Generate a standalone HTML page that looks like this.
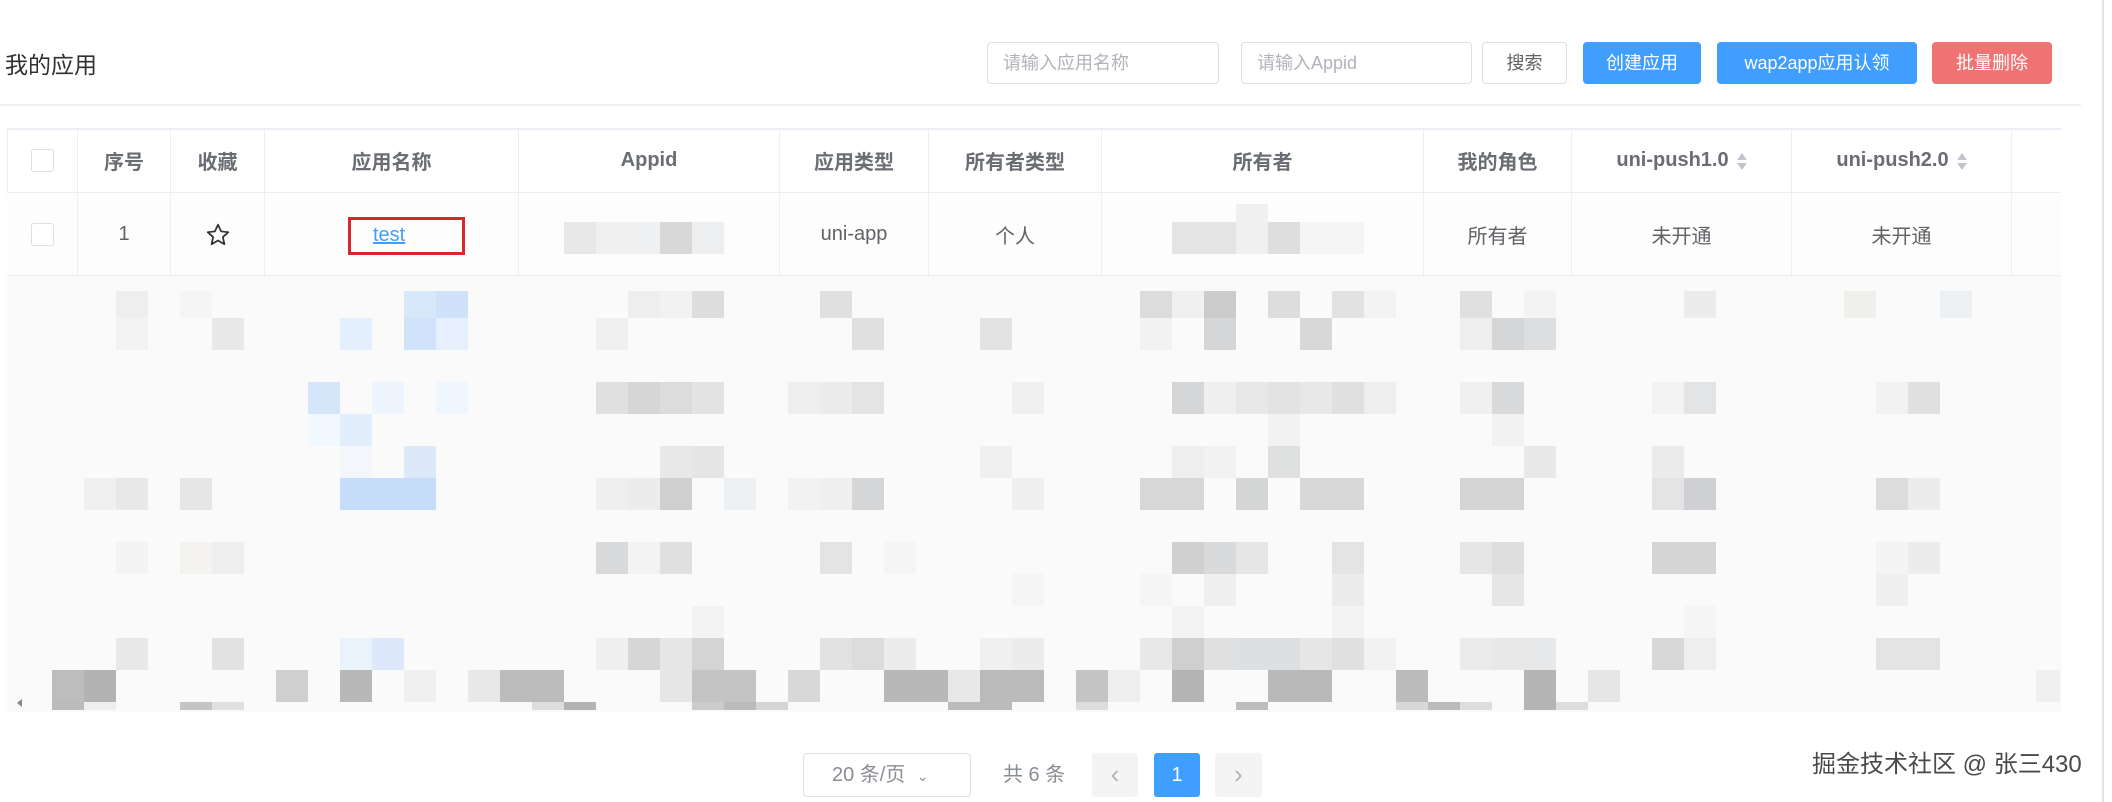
<!DOCTYPE html>
<html><head><meta charset="utf-8"><style>
*{margin:0;padding:0;box-sizing:border-box}
body{width:2112px;height:802px;background:#fff;position:relative;overflow:hidden;font-family:"Liberation Sans","Noto Sans CJK SC",sans-serif;color:#606266}
.a{position:absolute}
.inp{position:absolute;top:42px;height:42px;border:1px solid #dcdfe6;border-radius:4px;font-size:18px;color:#b0b3b8;padding-left:15px;line-height:40px}
.btn{position:absolute;top:42px;height:42px;border-radius:4px;font-size:18px;color:#fff;text-align:center;line-height:42px}
.th,.td{position:absolute;display:flex;align-items:center;justify-content:center;border-right:1px solid #ebeef5}
.th{top:128px;height:65px;font-size:20px;font-weight:bold;color:#6a6d73}
.td{top:193px;height:83px;font-size:20px;color:#606266}
.cb{width:23px;height:23px;border:1px solid #dcdfe6;border-radius:3px;background:#fff}
.car{display:inline-block;margin-left:8px;width:10px;height:20px;position:relative}
.car:before{content:"";position:absolute;left:0;top:2px;border:5px solid transparent;border-bottom:7px solid #c0c4cc;border-top:0}
.car:after{content:"";position:absolute;left:0;top:12px;border:5px solid transparent;border-top:7px solid #c0c4cc;border-bottom:0}
</style></head><body>
<div class="a" style="left:5px;top:50px;font-size:23px;color:#303133;line-height:30px">我的应用</div>
<div class="inp" style="left:987px;width:232px">请输入应用名称</div>
<div class="inp" style="left:1241px;width:231px">请输入Appid</div>
<div class="btn" style="left:1482px;width:85px;border:1px solid #dcdfe6;color:#606266;line-height:40px">搜索</div>
<div class="btn" style="left:1583px;width:118px;background:#409eff">创建应用</div>
<div class="btn" style="left:1717px;width:200px;background:#409eff">wap2app应用认领</div>
<div class="btn" style="left:1932px;width:120px;background:#f07272">批量删除</div>
<div class="a" style="left:0;top:104px;width:2081px;height:2px;background:#eef0f3"></div>
<div class="a" style="left:2102px;top:0;width:2px;height:802px;background:#e4e4e4"></div>

<!-- table frame -->
<div class="a" style="left:7px;top:128px;width:2054px;height:584px;border-left:1px solid #ebeef5;border-top:2px solid #ebeef5"></div>
<div class="a" style="left:7px;top:192px;width:2054px;height:1px;background:#ebeef5"></div>
<div class="a" style="left:7px;top:193px;width:2054px;height:83px;background:#fdfdfd"></div>
<div class="a" style="left:7px;top:275px;width:2054px;height:1px;background:#ebeef5"></div>
<div class="a" style="left:7px;top:276px;width:2054px;height:436px;background:#fafafa"></div>

<div class="th" style="left:7px;width:71px"><div class="cb"></div></div>
<div class="th" style="left:78px;width:93px">序号</div>
<div class="th" style="left:171px;width:94px">收藏</div>
<div class="th" style="left:265px;width:254px">应用名称</div>
<div class="th" style="left:519px;width:261px">Appid</div>
<div class="th" style="left:780px;width:149px">应用类型</div>
<div class="th" style="left:929px;width:173px">所有者类型</div>
<div class="th" style="left:1102px;width:322px">所有者</div>
<div class="th" style="left:1424px;width:148px">我的角色</div>
<div class="th" style="left:1572px;width:220px">uni-push1.0<span class="car"></span></div>
<div class="th" style="left:1792px;width:220px">uni-push2.0<span class="car"></span></div>

<div class="td" style="left:7px;width:71px"><div class="cb"></div></div>
<div class="td" style="left:78px;width:93px">1</div>
<div class="td" style="left:171px;width:94px"><svg width="26" height="26" viewBox="0 0 24 24"><path d="M12 2.5l2.9 6.2 6.6.7-5 4.5 1.4 6.6L12 17.1l-5.9 3.4 1.4-6.6-5-4.5 6.6-.7z" fill="none" stroke="#303133" stroke-width="1.6" stroke-linejoin="round"/></svg></div>
<div class="td" style="left:265px;width:254px"></div>
<div class="a" style="left:348px;top:217px;width:117px;height:38px;border:3px solid #d9272e"></div>
<div class="a" style="left:373px;top:221px;font-size:20px;color:#409eff;text-decoration:underline;line-height:28px">test</div>
<div class="td" style="left:519px;width:261px"></div>
<div class="td" style="left:780px;width:149px">uni-app</div>
<div class="td" style="left:929px;width:173px">个人</div>
<div class="td" style="left:1102px;width:322px"></div>
<div class="td" style="left:1424px;width:148px">所有者</div>
<div class="td" style="left:1572px;width:220px">未开通</div>
<div class="td" style="left:1792px;width:220px">未开通</div>

<svg class="a" style="left:0;top:0" width="2112" height="802">
<g>
<rect x="564" y="222" width="32" height="32" fill="#e8e8e8"/><rect x="596" y="222" width="32" height="32" fill="#f0f0f0"/><rect x="628" y="222" width="32" height="32" fill="#eef0f2"/><rect x="660" y="222" width="32" height="32" fill="#d8d8d8"/><rect x="692" y="222" width="32" height="32" fill="#eceef0"/>
<rect x="1172" y="222" width="64" height="32" fill="#e4e4e4"/><rect x="1236" y="204" width="32" height="50" fill="#f0f0f0"/><rect x="1268" y="222" width="32" height="32" fill="#dedede"/><rect x="1300" y="222" width="64" height="32" fill="#f5f5f5"/>
</g>
<g id="m">
<!-- r0 y291 -->
<rect x="116" y="291" width="32" height="27" fill="#eee"/><rect x="180" y="291" width="32" height="27" fill="#f5f5f5"/><rect x="404" y="291" width="32" height="27" fill="#d8e8fb"/><rect x="436" y="291" width="32" height="27" fill="#cfe2f9"/><rect x="628" y="291" width="32" height="27" fill="#eee"/><rect x="660" y="291" width="32" height="27" fill="#f2f2f2"/><rect x="692" y="291" width="32" height="27" fill="#ddd"/><rect x="820" y="291" width="32" height="27" fill="#e0e0e0"/>
<rect x="1140" y="291" width="32" height="27" fill="#dcdcdc"/><rect x="1172" y="291" width="32" height="27" fill="#f0f0f0"/><rect x="1204" y="291" width="32" height="27" fill="#ccc"/><rect x="1268" y="291" width="32" height="27" fill="#ddd"/><rect x="1332" y="291" width="32" height="27" fill="#e2e2e2"/><rect x="1364" y="291" width="32" height="27" fill="#f3f3f3"/><rect x="1460" y="291" width="32" height="27" fill="#e0e0e0"/><rect x="1524" y="291" width="32" height="27" fill="#f3f3f3"/><rect x="1684" y="291" width="32" height="27" fill="#ececec"/><rect x="1844" y="291" width="32" height="27" fill="#efefec"/><rect x="1940" y="291" width="32" height="27" fill="#eef1f3"/>
<!-- r1 y318 -->
<rect x="116" y="318" width="32" height="32" fill="#f3f3f3"/><rect x="212" y="318" width="32" height="32" fill="#e8e8e8"/><rect x="340" y="318" width="32" height="32" fill="#e3effc"/><rect x="404" y="318" width="32" height="32" fill="#d0e3fa"/><rect x="436" y="318" width="32" height="32" fill="#e6f0fc"/><rect x="596" y="318" width="32" height="32" fill="#f0f0f0"/><rect x="852" y="318" width="32" height="32" fill="#e0e0e0"/><rect x="980" y="318" width="32" height="32" fill="#e3e3e3"/>
<rect x="1140" y="318" width="32" height="32" fill="#f2f2f2"/><rect x="1204" y="318" width="32" height="32" fill="#d4d6d8"/><rect x="1300" y="318" width="32" height="32" fill="#d8d8d8"/><rect x="1460" y="318" width="32" height="32" fill="#eee"/><rect x="1492" y="318" width="32" height="32" fill="#d4d6d8"/><rect x="1524" y="318" width="32" height="32" fill="#dcdee0"/>
<!-- r3 y382 -->
<rect x="308" y="382" width="32" height="32" fill="#d5e6fb"/><rect x="372" y="382" width="32" height="32" fill="#eef5fe"/><rect x="436" y="382" width="32" height="32" fill="#f0f6fe"/><rect x="596" y="382" width="32" height="32" fill="#e0e0e0"/><rect x="628" y="382" width="32" height="32" fill="#d6d6d6"/><rect x="660" y="382" width="32" height="32" fill="#dcdcdc"/><rect x="692" y="382" width="32" height="32" fill="#e3e3e3"/><rect x="788" y="382" width="32" height="32" fill="#eee"/><rect x="820" y="382" width="32" height="32" fill="#ebebeb"/><rect x="852" y="382" width="32" height="32" fill="#e4e4e4"/><rect x="1012" y="382" width="32" height="32" fill="#f0f0f0"/>
<rect x="1172" y="382" width="32" height="32" fill="#d4d6d8"/><rect x="1204" y="382" width="32" height="32" fill="#efefef"/><rect x="1236" y="382" width="32" height="32" fill="#e8e8e8"/><rect x="1268" y="382" width="32" height="32" fill="#e3e3e3"/><rect x="1300" y="382" width="32" height="32" fill="#e8e8e8"/><rect x="1332" y="382" width="32" height="32" fill="#e0e0e0"/><rect x="1364" y="382" width="32" height="32" fill="#eee"/><rect x="1460" y="382" width="32" height="32" fill="#f0f0f0"/><rect x="1492" y="382" width="32" height="32" fill="#d8d9db"/><rect x="1652" y="382" width="32" height="32" fill="#f3f3f3"/><rect x="1684" y="382" width="32" height="32" fill="#e2e4e6"/><rect x="1876" y="382" width="32" height="32" fill="#f2f2f2"/><rect x="1908" y="382" width="32" height="32" fill="#e0e0e0"/>
<!-- r4 y414 -->
<rect x="308" y="414" width="32" height="32" fill="#f2f8ff"/><rect x="340" y="414" width="32" height="32" fill="#e2eefc"/><rect x="1268" y="414" width="32" height="32" fill="#f2f2f2"/><rect x="1492" y="414" width="32" height="32" fill="#f2f2f2"/>
<!-- r5 y446 -->
<rect x="340" y="446" width="32" height="32" fill="#f3f7fc"/><rect x="404" y="446" width="32" height="32" fill="#dde9f9"/><rect x="660" y="446" width="32" height="32" fill="#e8e8e8"/><rect x="692" y="446" width="32" height="32" fill="#e5e5e5"/><rect x="980" y="446" width="32" height="32" fill="#f0f0f0"/>
<rect x="1172" y="446" width="32" height="32" fill="#eee"/><rect x="1204" y="446" width="32" height="32" fill="#f2f2f2"/><rect x="1268" y="446" width="32" height="32" fill="#dfe0e0"/><rect x="1524" y="446" width="32" height="32" fill="#e8e8e8"/><rect x="1652" y="446" width="32" height="32" fill="#ebebeb"/>
<!-- r6 y478 -->
<rect x="84" y="478" width="32" height="32" fill="#f0f0f0"/><rect x="116" y="478" width="32" height="32" fill="#e8e8e8"/><rect x="180" y="478" width="32" height="32" fill="#e6e6e6"/><rect x="340" y="478" width="96" height="32" fill="#c5ddf8"/><rect x="596" y="478" width="32" height="32" fill="#efefef"/><rect x="628" y="478" width="32" height="32" fill="#ececec"/><rect x="660" y="478" width="32" height="32" fill="#cfcfcf"/><rect x="724" y="478" width="32" height="32" fill="#eef1f3"/><rect x="788" y="478" width="32" height="32" fill="#f2f2f2"/><rect x="820" y="478" width="32" height="32" fill="#efefef"/><rect x="852" y="478" width="32" height="32" fill="#d4d6d8"/><rect x="1012" y="478" width="32" height="32" fill="#efefef"/>
<rect x="1140" y="478" width="64" height="32" fill="#d7d7d7"/><rect x="1236" y="478" width="32" height="32" fill="#d4d6d6"/><rect x="1300" y="478" width="64" height="32" fill="#d8d8d8"/><rect x="1460" y="478" width="64" height="32" fill="#d4d4d4"/><rect x="1652" y="478" width="32" height="32" fill="#e4e4e4"/><rect x="1684" y="478" width="32" height="32" fill="#cfd0d4"/><rect x="1876" y="478" width="32" height="32" fill="#dcdcdc"/><rect x="1908" y="478" width="32" height="32" fill="#ececec"/>
<!-- r8 y542 -->
<rect x="116" y="542" width="32" height="32" fill="#f4f4f4"/><rect x="180" y="542" width="32" height="32" fill="#f5f3f0"/><rect x="212" y="542" width="32" height="32" fill="#eee"/><rect x="596" y="542" width="32" height="32" fill="#d8d9db"/><rect x="628" y="542" width="32" height="32" fill="#f3f3f3"/><rect x="660" y="542" width="32" height="32" fill="#e0e0e0"/><rect x="820" y="542" width="32" height="32" fill="#e4e4e4"/><rect x="884" y="542" width="32" height="32" fill="#f5f5f5"/>
<rect x="1172" y="542" width="32" height="32" fill="#d0d0d0"/><rect x="1204" y="542" width="32" height="32" fill="#d8dadc"/><rect x="1236" y="542" width="32" height="32" fill="#e6e6e6"/><rect x="1332" y="542" width="32" height="32" fill="#e4e4e4"/><rect x="1460" y="542" width="32" height="32" fill="#e6e6e6"/><rect x="1492" y="542" width="32" height="32" fill="#dedede"/><rect x="1652" y="542" width="64" height="32" fill="#d5d5d5"/><rect x="1876" y="542" width="32" height="32" fill="#f4f4f4"/><rect x="1908" y="542" width="32" height="32" fill="#ececec"/>
<!-- r9 y574 -->
<rect x="1012" y="574" width="32" height="32" fill="#f5f5f5"/><rect x="1140" y="574" width="32" height="32" fill="#f5f5f5"/><rect x="1204" y="574" width="32" height="32" fill="#efefef"/><rect x="1332" y="574" width="32" height="32" fill="#ececec"/><rect x="1492" y="574" width="32" height="32" fill="#e6e6e6"/><rect x="1876" y="574" width="32" height="32" fill="#efefef"/>
<!-- r10 y606 -->
<rect x="692" y="606" width="32" height="32" fill="#f3f3f3"/><rect x="1172" y="606" width="32" height="32" fill="#f3f3f3"/><rect x="1332" y="606" width="32" height="32" fill="#f3f3f3"/><rect x="1684" y="606" width="32" height="32" fill="#f5f5f5"/>
<!-- r11 y638 -->
<rect x="116" y="638" width="32" height="32" fill="#e8e8e8"/><rect x="212" y="638" width="32" height="32" fill="#e2e2e2"/><rect x="340" y="638" width="32" height="32" fill="#eaf2fc"/><rect x="372" y="638" width="32" height="32" fill="#dde9fa"/><rect x="596" y="638" width="32" height="32" fill="#efefef"/><rect x="628" y="638" width="32" height="32" fill="#d6d6d6"/><rect x="660" y="638" width="32" height="32" fill="#e6e6e6"/><rect x="692" y="638" width="32" height="32" fill="#d4d4d4"/><rect x="820" y="638" width="32" height="32" fill="#e2e2e2"/><rect x="852" y="638" width="32" height="32" fill="#dcdcdc"/><rect x="884" y="638" width="32" height="32" fill="#ececec"/><rect x="980" y="638" width="32" height="32" fill="#f0f0f0"/><rect x="1012" y="638" width="32" height="32" fill="#ececec"/>
<rect x="1140" y="638" width="32" height="32" fill="#e8e8e8"/><rect x="1172" y="638" width="32" height="32" fill="#cfcfcf"/><rect x="1204" y="638" width="32" height="32" fill="#e0e0e0"/><rect x="1236" y="638" width="64" height="32" fill="#dde0e2"/><rect x="1300" y="638" width="32" height="32" fill="#e6e6e6"/><rect x="1332" y="638" width="32" height="32" fill="#e0e0e0"/><rect x="1364" y="638" width="32" height="32" fill="#f2f2f2"/><rect x="1460" y="638" width="32" height="32" fill="#ebebeb"/><rect x="1492" y="638" width="32" height="32" fill="#e8e8e8"/><rect x="1524" y="638" width="32" height="32" fill="#e6e8ea"/><rect x="1652" y="638" width="32" height="32" fill="#d8d8d8"/><rect x="1684" y="638" width="32" height="32" fill="#eee"/><rect x="1876" y="638" width="64" height="32" fill="#e4e4e4"/>
<!-- r12 y670 -->
<rect x="52" y="670" width="32" height="32" fill="#bdbdbd"/><rect x="84" y="670" width="32" height="32" fill="#b3b3b3"/><rect x="276" y="670" width="32" height="32" fill="#cfcfcf"/><rect x="340" y="670" width="32" height="32" fill="#b8b8b8"/><rect x="404" y="670" width="32" height="32" fill="#f0f0f0"/><rect x="468" y="670" width="32" height="32" fill="#e8e8e8"/><rect x="500" y="670" width="64" height="32" fill="#bcbcbc"/><rect x="660" y="670" width="32" height="32" fill="#e6e6e6"/><rect x="692" y="670" width="64" height="32" fill="#c4c4c4"/><rect x="788" y="670" width="32" height="32" fill="#d8d8d8"/><rect x="884" y="670" width="64" height="32" fill="#b8b8b8"/><rect x="948" y="670" width="32" height="32" fill="#e8e8e8"/><rect x="980" y="670" width="64" height="32" fill="#bababa"/>
<rect x="1076" y="670" width="32" height="32" fill="#c4c4c4"/><rect x="1108" y="670" width="32" height="32" fill="#eee"/><rect x="1172" y="670" width="32" height="32" fill="#b4b4b4"/><rect x="1268" y="670" width="64" height="32" fill="#b9b9b9"/><rect x="1396" y="670" width="32" height="32" fill="#bbb"/><rect x="1524" y="670" width="32" height="32" fill="#b4b4b4"/><rect x="1588" y="670" width="32" height="32" fill="#e6e6e6"/><rect x="2036" y="670" width="24" height="32" fill="#f0f0f0"/>
<!-- r13 y702 -->
<rect x="52" y="702" width="32" height="8" fill="#bbb"/><rect x="84" y="702" width="32" height="8" fill="#eee"/><rect x="180" y="702" width="32" height="8" fill="#c4c4c4"/><rect x="212" y="702" width="32" height="8" fill="#e0e0e0"/><rect x="532" y="702" width="32" height="8" fill="#ddd"/><rect x="564" y="702" width="32" height="8" fill="#b3b3b3"/><rect x="692" y="702" width="32" height="8" fill="#ccc"/><rect x="724" y="702" width="32" height="8" fill="#bbb"/><rect x="756" y="702" width="32" height="8" fill="#d4d4d4"/><rect x="948" y="702" width="64" height="8" fill="#bbb"/>
<rect x="1076" y="702" width="32" height="8" fill="#ddd"/><rect x="1236" y="702" width="32" height="8" fill="#bdbdbd"/><rect x="1396" y="702" width="32" height="8" fill="#d8d8d8"/><rect x="1428" y="702" width="32" height="8" fill="#bbb"/><rect x="1460" y="702" width="32" height="8" fill="#ddd"/><rect x="1524" y="702" width="32" height="8" fill="#b4b4b4"/><rect x="1556" y="702" width="32" height="8" fill="#ddd"/>
</g>
<path d="M22 699l-5 4 5 4z" fill="#888"/>
</svg>

<!-- pagination -->
<div class="a" style="left:803px;top:753px;width:168px;height:44px;border:1px solid #dcdfe6;border-radius:4px;font-size:20px;color:#8a8d93;line-height:42px;padding-left:28px">20 条/页 <span style="font-size:14px;margin-left:6px">&#8964;</span></div>
<div class="a" style="left:1003px;top:753px;font-size:20px;color:#8a8d93;line-height:44px">共 6 条</div>
<div class="a" style="left:1092px;top:753px;width:46px;height:44px;background:#f4f4f5;border-radius:3px;text-align:center;line-height:42px;color:#b0b3b8;font-size:26px">‹</div>
<div class="a" style="left:1154px;top:753px;width:46px;height:44px;background:#409eff;border-radius:3px;text-align:center;line-height:44px;color:#fff;font-size:20px">1</div>
<div class="a" style="left:1215px;top:753px;width:47px;height:44px;background:#f4f4f5;border-radius:3px;text-align:center;line-height:42px;color:#b0b3b8;font-size:26px">›</div>
<div class="a" style="left:1812px;top:750px;font-size:24px;color:#4a4a4a;line-height:30px;white-space:nowrap;text-shadow:0 0 2px #fff,0 0 2px #fff">掘金技术社区 @ 张三430</div>
</body></html>
